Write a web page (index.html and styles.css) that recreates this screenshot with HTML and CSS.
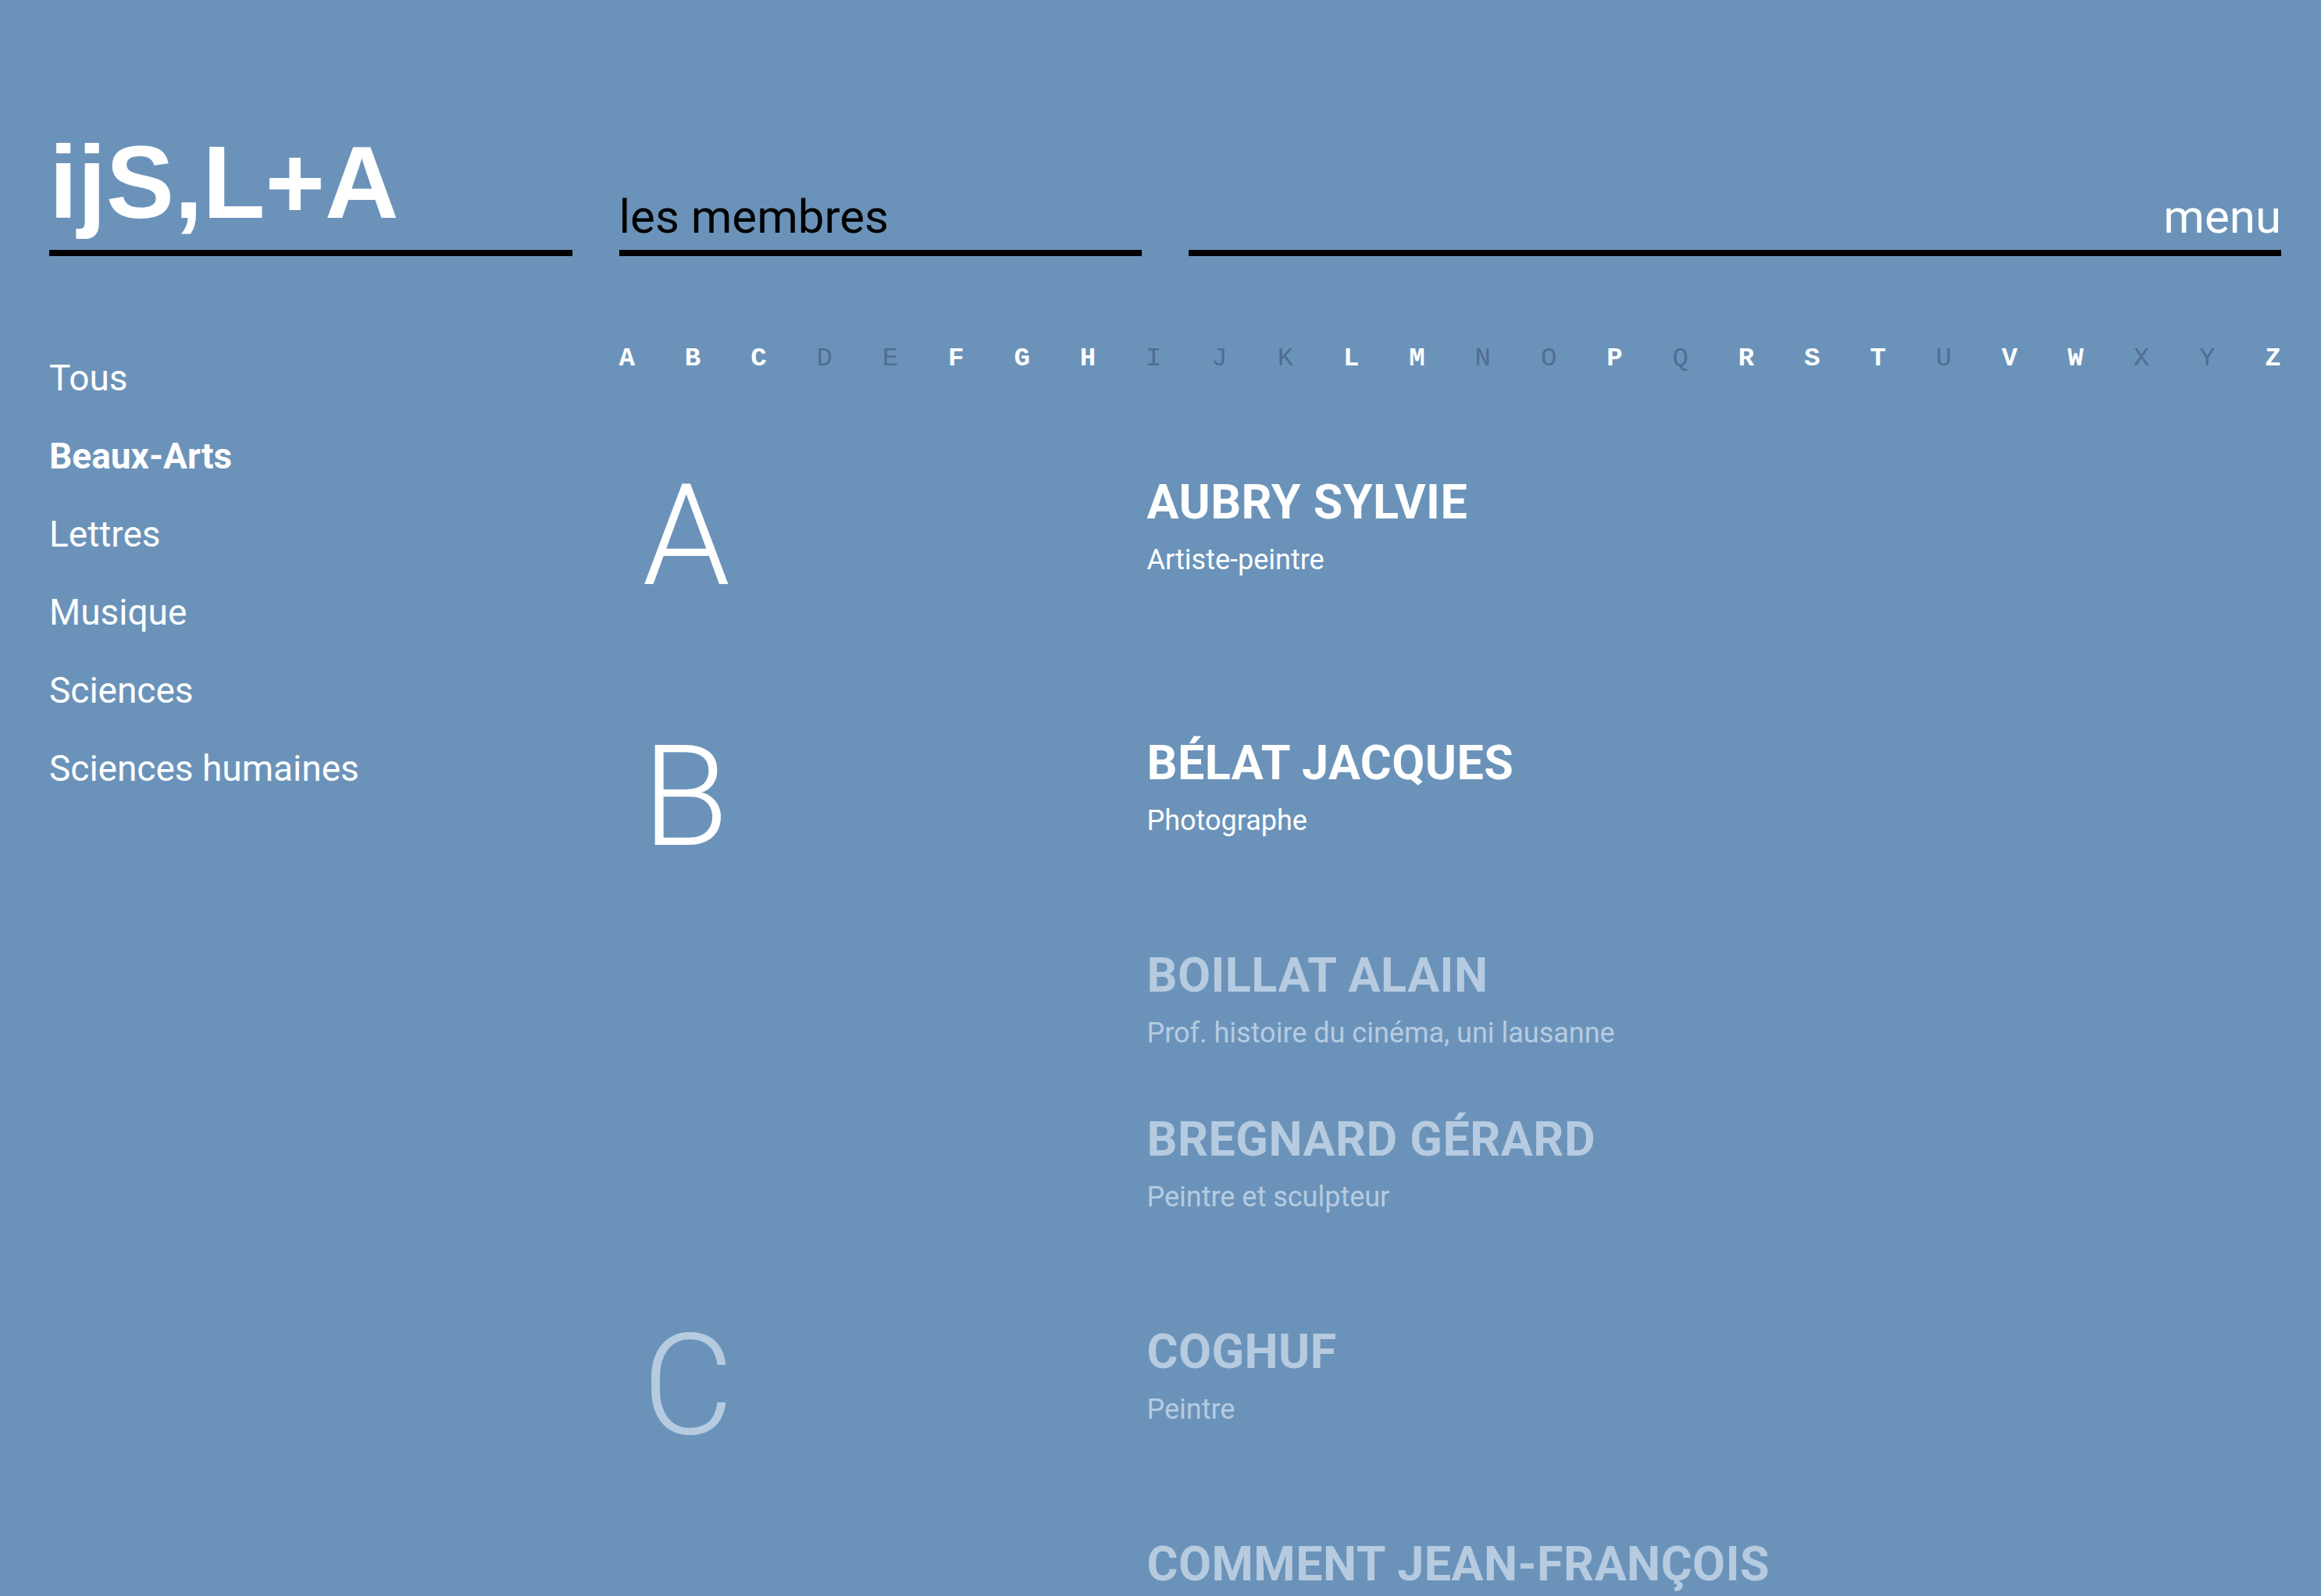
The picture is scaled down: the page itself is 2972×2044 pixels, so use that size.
FILE: index.html
```html
<!DOCTYPE html>
<html lang="fr">
<head>
    <meta charset="UTF-8">
    <meta name="viewport" content="width=device-width, initial-scale=1.0">
    <title>ijS,L+A - les membres</title>
    <link rel="stylesheet" href="styles.css">
</head>
<body>
    <header class="top">
        <div class="logo cell">ijS,L+A</div>
        <div class="page-title cell">les membres</div>
        <div class="menu cell">menu</div>
    </header>

    <div class="layout">
        <nav class="categories">
            <a href="#">Tous</a>
            <a href="#" class="current">Beaux-Arts</a>
            <a href="#">Lettres</a>
            <a href="#">Musique</a>
            <a href="#">Sciences</a>
            <a href="#">Sciences humaines</a>
        </nav>

        <main class="members">
            <div class="alphabet">
                <a href="#" class="on">A</a>
                <a href="#" class="on">B</a>
                <a href="#" class="on">C</a>
                <span>D</span>
                <span>E</span>
                <a href="#" class="on">F</a>
                <a href="#" class="on">G</a>
                <a href="#" class="on">H</a>
                <span>I</span>
                <span>J</span>
                <span>K</span>
                <a href="#" class="on">L</a>
                <a href="#" class="on">M</a>
                <span>N</span>
                <span>O</span>
                <a href="#" class="on">P</a>
                <span>Q</span>
                <a href="#" class="on">R</a>
                <a href="#" class="on">S</a>
                <a href="#" class="on">T</a>
                <span>U</span>
                <a href="#" class="on">V</a>
                <a href="#" class="on">W</a>
                <span>X</span>
                <span>Y</span>
                <a href="#" class="on">Z</a>
            </div>

            <section class="group">
                <div class="initial">A</div>
                <div class="entries">
                    <div class="entry tall">
                        <h2>AUBRY SYLVIE</h2>
                        <p>Artiste-peintre</p>
                    </div>
                </div>
            </section>

            <section class="group">
                <div class="initial">B</div>
                <div class="entries">
                    <div class="entry tall">
                        <h2>BÉLAT JACQUES</h2>
                        <p>Photographe</p>
                    </div>
                    <div class="entry muted">
                        <h2>BOILLAT ALAIN</h2>
                        <p>Prof. histoire du cinéma, uni lausanne</p>
                    </div>
                    <div class="entry muted">
                        <h2>BREGNARD GÉRARD</h2>
                        <p>Peintre et sculpteur</p>
                    </div>
                </div>
            </section>

            <section class="group muted">
                <div class="initial">C</div>
                <div class="entries">
                    <div class="entry tall">
                        <h2>COGHUF</h2>
                        <p>Peintre</p>
                    </div>
                    <div class="entry">
                        <h2>COMMENT JEAN-FRANÇOIS</h2>
                        <p>Artiste</p>
                    </div>
                </div>
            </section>
        </main>
    </div>
</body>
</html>
```

FILE: styles.css
```css
body {
    margin: 0;
    padding: 0 51px 0 63px;
    background-color: #6b93ba;
    color: white;
    font-family: Roboto, "Noto Sans", sans-serif;
    height: 100vh;
    overflow: hidden;
}
a {
    color: inherit;
    text-decoration: none;
}

/* Header */
.top {
    display: grid;
    grid-template-columns: repeat(4, 1fr);
    column-gap: 60px;
    align-items: end;
    padding-top: 168px;
}
.cell {
    border-bottom: 8px solid black;
}
.logo {
    font-family: "Liberation Sans", Arial, sans-serif;
    font-weight: bold;
    font-size: 131px;
    line-height: 131px;
    padding-bottom: 21px;
}
.page-title,
.menu {
    font-size: 60px;
    line-height: 60px;
    padding-bottom: 12px;
}
.page-title {
    color: black;
}
.menu {
    grid-column: span 2;
    text-align: right;
}

/* Body */
.layout {
    display: grid;
    grid-template-columns: repeat(4, 1fr);
    column-gap: 60px;
}
.categories {
    display: flex;
    flex-direction: column;
    padding-top: 106px;
}
.categories a {
    font-size: 46px;
    line-height: 100px;
}
.categories a.current {
    font-weight: bold;
}
.members {
    grid-column: span 3;
    padding-top: 111px;
}

.alphabet {
    display: flex;
    justify-content: space-between;
    font-family: "Liberation Mono", "DejaVu Sans Mono", monospace;
    font-size: 34px;
    line-height: 40px;
    color: #4f6e93;
    margin-bottom: 128px;
}
.alphabet .on {
    color: white;
    font-weight: bold;
}

/* Groups by letter */
.group {
    display: grid;
    grid-template-columns: 676px 1fr;
    margin-bottom: 62px;
}
.initial {
    font-family: Roboto, "Liberation Sans", sans-serif;
    font-weight: 300;
    font-size: 180px;
    line-height: 160px;
    padding-left: 30px;
}
.entry {
    padding-bottom: 76px;
}
.entry.tall {
    padding-bottom: 138px;
}
.entry h2 {
    margin: 0;
    font-size: 61px;
    line-height: 72px;
    font-weight: bold;
    letter-spacing: 0.5px;
}
.entry p {
    margin: 14px 0 0;
    font-size: 36px;
    line-height: 48px;
}
.muted,
.muted .initial {
    color: #b6cbe0;
}
```
